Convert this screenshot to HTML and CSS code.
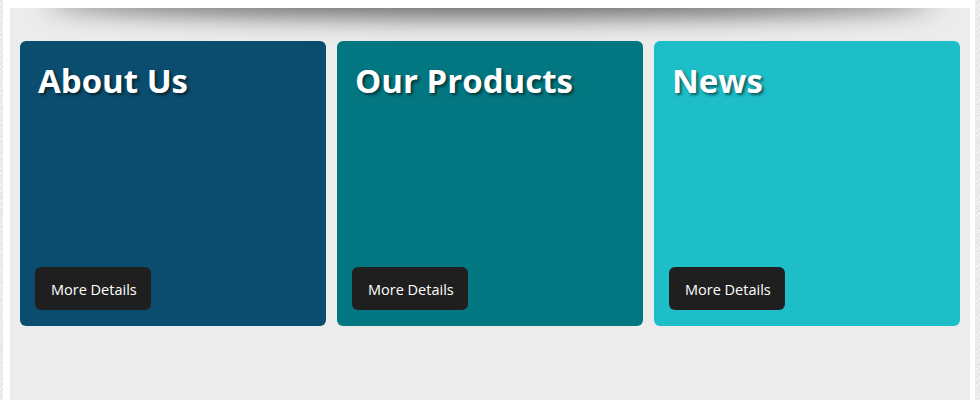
FILE: index.html
```html
<!DOCTYPE html>
<html>
<head>
<meta charset="utf-8">
<link rel="stylesheet" href="styles.css">
</head>
<body>
<div class="page">
  <div class="panel">
    <div class="cards">
      <div class="card card-about">
        <h2 class="card-title">About Us</h2>
        <a class="btn" href="#">More Details</a>
      </div>
      <div class="card card-products">
        <h2 class="card-title">Our Products</h2>
        <a class="btn" href="#">More Details</a>
      </div>
      <div class="card card-news">
        <h2 class="card-title">News</h2>
        <a class="btn" href="#">More Details</a>
      </div>
    </div>
  </div>
</div>
</body>
</html>
```
FILE: styles.css
```css
html, body {
  margin: 0;
  padding: 0;
  height: 100%;
}
body {
  background-color: #ebebeb;
  background-image:
    repeating-linear-gradient(45deg, rgba(0,0,0,0.03) 0 1px, transparent 1px 3px),
    repeating-linear-gradient(-45deg, rgba(255,255,255,0.5) 0 1px, transparent 1px 4px);
  font-family: "Open Sans", "Liberation Sans", sans-serif;
  overflow: hidden;
}
.page {
  margin-left: 3px;
  width: 972px;
  height: 100%;
  box-sizing: border-box;
  background: #ffffff;
  padding: 8px 5px 0 7px;
}
.panel {
  position: relative;
  overflow: hidden;
  box-sizing: border-box;
  background: #ececec;
  height: 100%;
  padding: 33px 10px 0 10px;
}
.panel::before {
  content: "";
  position: absolute;
  top: -30px;
  left: 36px;
  right: 36px;
  height: 30px;
  border-radius: 50%;
  box-shadow: 0 8px 26px rgba(0,0,0,0.62);
}
.cards {
  display: flex;
  gap: 11px;
}
.card {
  width: 306px;
  height: 285px;
  border-radius: 6px;
  box-sizing: border-box;
  padding: 18px 16px 16px 15px;
  display: flex;
  flex-direction: column;
  align-items: flex-start;
  justify-content: space-between;
}
.card-about { background: #0b4d6e; }
.card-products { background: #027781; }
.card-news { background: #1ebec8; }
.card-title {
  margin: 0 0 0 3px;
  font-size: 33px;
  font-weight: 700;
  color: #ffffff;
  line-height: 1.36;
  text-shadow: 2px 2px 3px rgba(0,0,0,0.55);
}
.btn {
  display: block;
  background: #1f1f1f;
  color: #ffffff;
  text-decoration: none;
  font-size: 14.5px;
  line-height: 45px;
  height: 43px;
  padding: 0 14px 0 16px;
  border-radius: 6px;
}
```
